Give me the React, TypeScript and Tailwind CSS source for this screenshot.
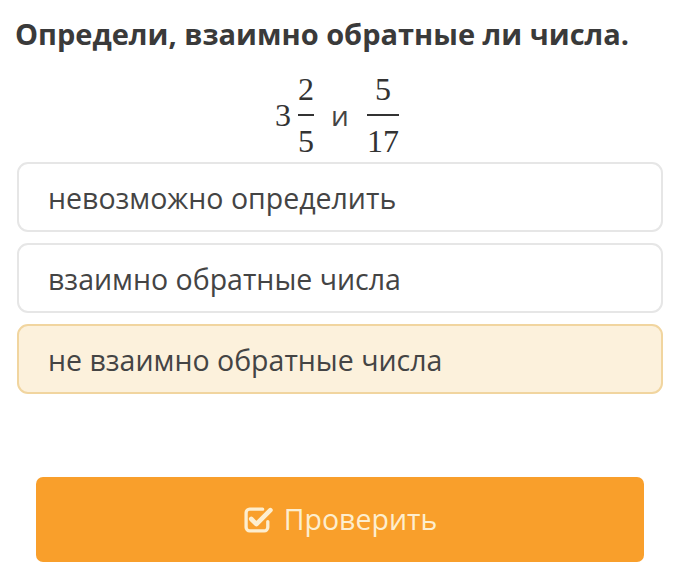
import React from "react";

const options = [
  { text: "невозможно определить", selected: false },
  { text: "взаимно обратные числа", selected: false },
  { text: "не взаимно обратные числа", selected: true },
];

// FA4-style "check-square-o"
function CheckSquare() {
  return (
    <svg width="31" height="29" viewBox="0 0 30 28" className="shrink-0">
      <path
        d="M19 4 H6.5 A3.5 3.5 0 0 0 3 7.5 V21.5 A3.5 3.5 0 0 0 6.5 25 H20.5 A3.5 3.5 0 0 0 24 21.5 V16"
        fill="none"
        stroke="#fdeecf"
        strokeWidth="3.2"
        strokeLinecap="round"
      />
      <path
        d="M8 13.5 L13 18.5 L26.5 5"
        fill="none"
        stroke="#fdeecf"
        strokeWidth="4.5"
        strokeLinecap="round"
        strokeLinejoin="round"
      />
    </svg>
  );
}

function Frac({ top, bottom }: { top: string; bottom: string }) {
  return (
    <span className="inline-flex flex-col items-center leading-none px-[4px]">
      <span className="pb-[9px]">{top}</span>
      <span className="h-[2px] w-full bg-[#333]" />
      <span className="pt-[9px]">{bottom}</span>
    </span>
  );
}

export default function App() {
  return (
    <div className="w-[700px] h-[580px] bg-white font-['Open_Sans',sans-serif] overflow-hidden">
      <h1 className="pl-[15px] pt-[15px] text-[29px] font-bold leading-[38px] text-[#3a3a3a]">
        Определи, взаимно обратные ли числа.
      </h1>

      {/* expression */}
      <div className="flex justify-center items-center mt-[24px] h-[76px] pr-[22px] text-[#333]">
        <span className="font-['Liberation_Serif',serif] text-[32px] flex items-center">
          <span className="mr-[3px]">3</span>
          <Frac top="2" bottom="5" />
        </span>
        <span className="ml-[13px] mr-[14px] text-[28px] text-[#444] leading-none">и</span>
        <span className="font-['Liberation_Serif',serif] text-[32px] flex items-center">
          <Frac top="5" bottom="17" />
        </span>
      </div>

      {/* options */}
      <div className="flex flex-col gap-[11px] mt-[9px] pl-[17px] pr-[37px]">
        {options.map((o) => (
          <div
            key={o.text}
            className={
              o.selected
                ? "h-[70px] rounded-[11px] border-2 border-[#f1d59f] bg-[#fcf1dc] flex items-center pl-[29px] pt-[2px] text-[28.5px] text-[#444]"
                : "h-[70px] rounded-[11px] border-2 border-[#e6e6e6] bg-white flex items-center pl-[29px] pt-[2px] text-[28.5px] text-[#444]"
            }
          >
            {o.text}
          </div>
        ))}
      </div>

      {/* check button */}
      <div className="mt-[83px] pl-[36px] pr-[56px]">
        <button className="w-full h-[85px] rounded-[7px] bg-[#f99f2b] flex items-center justify-center gap-[10px] text-[28.5px] text-[#fdeecf]">
          <CheckSquare />
          <span>Проверить</span>
        </button>
      </div>
    </div>
  );
}
